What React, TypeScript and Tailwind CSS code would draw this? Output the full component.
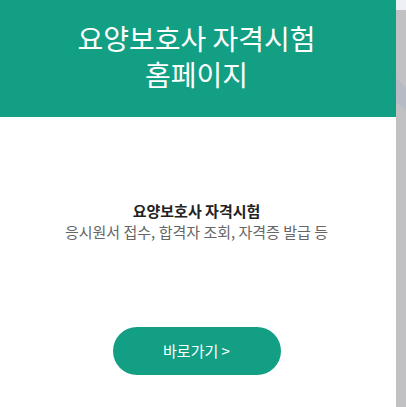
import React from "react";

export default function App() {
  return (
    <div
      className="flex w-[406px] h-[407px] overflow-hidden bg-white"
      style={{ fontFamily: '"Noto Sans CJK KR", "Noto Sans", sans-serif' }}
    >
      <div className="w-[396px] flex flex-col">
        <div className="h-[117px] bg-[#139f84] pt-[20px] flex flex-col items-center text-white text-[28px] leading-[36px] pr-[3px]">
          <h1 className="text-center font-normal">
            요양보호사 자격시험
            <br />
            홈페이지
          </h1>
        </div>
        <div className="flex flex-col items-center pt-[83px] pr-[3px]">
          <div className="text-[15px] leading-[21px] font-bold text-[#222]">요양보호사 자격시험</div>
          <div className="text-[15px] leading-[21px] text-[#666]">응시원서 접수, 합격자 조회, 자격증 발급 등</div>
          <button className="mt-[85px] w-[168px] h-[48px] rounded-full bg-[#139f84] text-white text-[15px] flex items-center justify-center">
            바로가기 &gt;
          </button>
        </div>
      </div>
      <div className="w-[10px] h-full bg-[#c1c1c3] flex flex-col">
        <div className="h-[10px] bg-[#eef0f6]" />
        <svg width="10" height="120" viewBox="0 0 10 120" className="block">
          <polygon points="0,68 10,78 10,100 0,92" fill="#b0b6c6" opacity="0.7" />
        </svg>
      </div>
    </div>
  );
}
